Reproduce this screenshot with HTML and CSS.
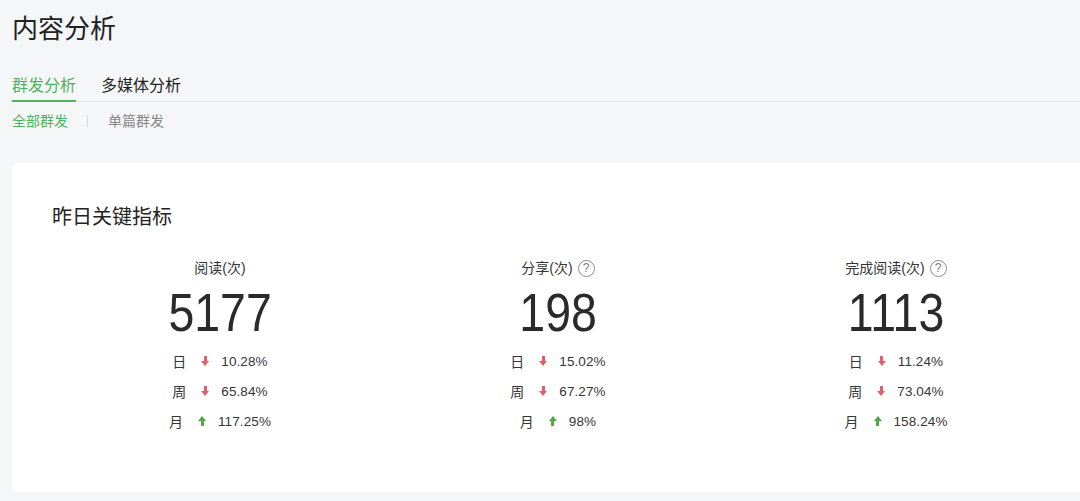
FILE: index.html
```html
<!DOCTYPE html>
<html lang="zh">
<head>
<meta charset="utf-8">
<link rel="stylesheet" href="styles.css">
</head>
<body>
<div class="page">
  <h1 class="title">内容分析</h1>
  <div class="tabs">
    <div class="tab active">群发分析</div>
    <div class="tab">多媒体分析</div>
  </div>
  <div class="subtabs">
    <span class="sub active">全部群发</span>
    <span class="sep"></span>
    <span class="sub">单篇群发</span>
  </div>
  <div class="card">
    <h2 class="card-title">昨日关键指标</h2>
    <div class="metrics">
      <div class="metric">
        <div class="label">阅读(次)</div>
        <div class="value">5177</div>
        <div class="rows">
          <div class="row"><span class="k">日</span><span class="arrow down"></span><span class="pct">10.28%</span></div>
          <div class="row"><span class="k">周</span><span class="arrow down"></span><span class="pct">65.84%</span></div>
          <div class="row"><span class="k">月</span><span class="arrow up"></span><span class="pct">117.25%</span></div>
        </div>
      </div>
      <div class="metric">
        <div class="label">分享(次)<span class="help">?</span></div>
        <div class="value">198</div>
        <div class="rows">
          <div class="row"><span class="k">日</span><span class="arrow down"></span><span class="pct">15.02%</span></div>
          <div class="row"><span class="k">周</span><span class="arrow down"></span><span class="pct">67.27%</span></div>
          <div class="row"><span class="k">月</span><span class="arrow up"></span><span class="pct">98%</span></div>
        </div>
      </div>
      <div class="metric">
        <div class="label">完成阅读(次)<span class="help">?</span></div>
        <div class="value">1113</div>
        <div class="rows">
          <div class="row"><span class="k">日</span><span class="arrow down"></span><span class="pct">11.24%</span></div>
          <div class="row"><span class="k">周</span><span class="arrow down"></span><span class="pct">73.04%</span></div>
          <div class="row"><span class="k">月</span><span class="arrow up"></span><span class="pct">158.24%</span></div>
        </div>
      </div>
    </div>
  </div>
</div>
</body>
</html>
```
FILE: styles.css
```css
html, body {
  margin: 0;
  padding: 0;
  background: #f5f6f7;
  font-family: "Liberation Sans", "Noto Sans CJK SC", sans-serif;
  color: #353535;
  overflow: hidden;
}
.page {
  width: 1110px;
  padding: 0 0 0 12px;
}
.title {
  margin: 0;
  padding-top: 13px;
  height: 44px;
  font-size: 26px;
  font-weight: 400;
  line-height: 32px;
  color: #222;
}
.tabs {
  display: flex;
  gap: 25px;
  margin-top: 18px;
  border-bottom: 1px solid #e4e6e9;
}
.tab {
  font-size: 16px;
  line-height: 22px;
  padding-bottom: 3px;
  color: #222;
}
.tab.active {
  color: #4cb55b;
  border-bottom: 2px solid #4cb55b;
  margin-bottom: -1px;
}
.subtabs {
  display: flex;
  align-items: center;
  margin-top: 9px;
  font-size: 14px;
  line-height: 20px;
}
.sub { color: #888; }
.sub.active { color: #4cb55b; }
.sep {
  width: 1px;
  height: 12px;
  background: #dcdcdc;
  margin: 0 20px 0 19px;
}
.card {
  margin-top: 32px;
  background: #fff;
  border-radius: 6px;
  height: 329px;
  padding: 40px 0 0 40px;
  box-sizing: border-box;
}
.card-title {
  margin: 0;
  font-size: 20px;
  font-weight: 400;
  line-height: 28px;
  color: #222;
}
.metrics {
  display: grid;
  grid-template-columns: repeat(3, 338px);
  margin-top: 27px;
  margin-left: -1px;
}
.metric {
  display: flex;
  flex-direction: column;
  align-items: center;
}
.label {
  display: flex;
  align-items: center;
  font-size: 14px;
  line-height: 20px;
  color: #353535;
  height: 20px;
}
.help {
  display: inline-flex;
  align-items: center;
  justify-content: center;
  width: 15px;
  height: 15px;
  border: 1px solid #8a8a8a;
  border-radius: 50%;
  font-size: 12px;
  line-height: 1;
  color: #777;
  margin-left: 5px;
}
.value {
  font-size: 54px;
  line-height: 60px;
  margin-top: 4px;
  color: #2a2a2a;
  font-family: "Liberation Sans", sans-serif;
  transform: scaleX(0.86);
}
.rows {
  margin-top: 4px;
  display: flex;
  flex-direction: column;
  align-items: center;
}
.row {
  display: flex;
  align-items: center;
  height: 30px;
  font-size: 14px;
  color: #353535;
}
.k { width: 14px; }
.arrow {
  position: relative;
  width: 8px;
  height: 10px;
  margin: 0 12px 0 15px;
}
.arrow::before {
  content: "";
  position: absolute;
  left: 2.5px;
  width: 3px;
  height: 5px;
}
.arrow::after {
  content: "";
  position: absolute;
  left: 0;
  border-left: 4px solid transparent;
  border-right: 4px solid transparent;
}
.arrow.down::before { top: 0; background: #e0606a; }
.arrow.down::after { top: 5px; border-top: 5px solid #e0606a; }
.arrow.up::before { top: 5px; background: #52a843; }
.arrow.up::after { top: 0; border-bottom: 5px solid #52a843; }
.pct { font-size: 13.5px; letter-spacing: 0.1px; }
```
